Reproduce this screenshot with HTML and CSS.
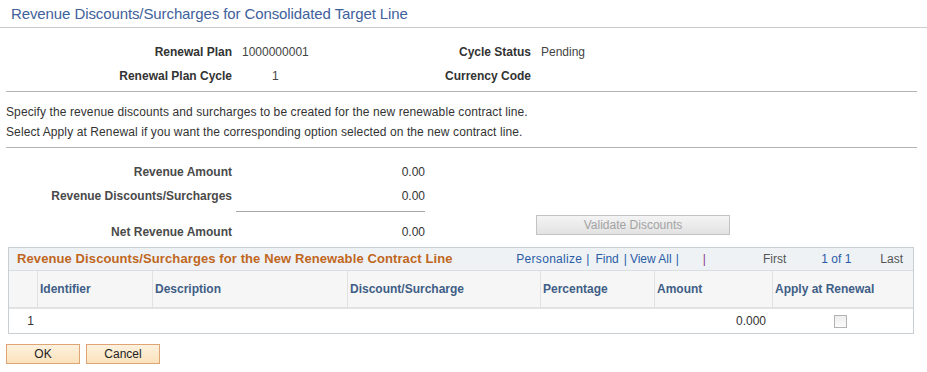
FILE: index.html
```html
<!DOCTYPE html>
<html lang="en">
<head>
    <meta charset="UTF-8">
    <title>Revenue Discounts/Surcharges for Consolidated Target Line</title>
    <link rel="stylesheet" href="styles.css">
</head>
<body>
    <h1 class="page-title">Revenue Discounts/Surcharges for Consolidated Target Line</h1>

    <div class="fields">
        <span class="label">Renewal Plan</span>
        <span class="value">1000000001</span>
        <span class="label">Cycle Status</span>
        <span class="value">Pending</span>
        <span class="label">Renewal Plan Cycle</span>
        <span class="value cycle">1</span>
        <span class="label">Currency Code</span>
        <span class="value"></span>
    </div>

    <hr class="rule">
    <p class="instructions">Specify the revenue discounts and surcharges to be created for the new renewable contract line.<br>
    Select Apply at Renewal if you want the corresponding option selected on the new contract line.</p>
    <hr class="rule rule-bottom">

    <div class="amounts">
        <span class="amt-label">Revenue Amount</span>
        <span class="amt-value">0.00</span>
        <span class="amt-label">Revenue Discounts/Surcharges</span>
        <span class="amt-value">0.00</span>
        <span class="total-line"></span>
        <span class="amt-label net-row">Net Revenue Amount</span>
        <span class="amt-value net-row">0.00</span>
        <button class="btn-validate" disabled>Validate Discounts</button>
    </div>

    <div class="grid">
        <div class="grid-head">
            <span class="grid-title">Revenue Discounts/Surcharges for the New Renewable Contract Line</span>
            <div class="grid-nav">
                <a class="nav-link nl-personalize">Personalize</a>
                <span class="sep">|</span>
                <a class="nav-link nl-find">Find</a>
                <span class="sep sep-b">|</span>
                <a class="nav-link nl-view">View All</a>
                <span class="sep sep-c">|</span>
                <span class="sep sep-purple">|</span>
                <span class="nav-off nl-first">First</span>
                <a class="nav-link nl-count">1 of 1</a>
                <span class="nav-off nl-last">Last</span>
            </div>
        </div>
        <table class="grid-table">
            <colgroup>
                <col style="width:28px">
                <col style="width:115px">
                <col style="width:195px">
                <col style="width:193px">
                <col style="width:114px">
                <col style="width:118px">
                <col style="width:141px">
            </colgroup>
            <thead>
                <tr>
                    <th></th>
                    <th>Identifier</th>
                    <th>Description</th>
                    <th>Discount/Surcharge</th>
                    <th>Percentage</th>
                    <th>Amount</th>
                    <th>Apply at Renewal</th>
                </tr>
            </thead>
            <tbody>
                <tr>
                    <td class="row-num">1</td>
                    <td></td>
                    <td></td>
                    <td></td>
                    <td></td>
                    <td class="num">0.000</td>
                    <td class="check-cell"><span class="checkbox"></span></td>
                </tr>
            </tbody>
        </table>
    </div>

    <div class="actions">
        <button class="btn">OK</button>
        <button class="btn">Cancel</button>
    </div>
</body>
</html>
```

FILE: styles.css
```css
body {
    margin: 0;
    font-family: "Liberation Sans", Arial, sans-serif;
    font-size: 12px;
    color: #333;
    background: #fff;
}
.page-title {
    margin: 0;
    padding: 5px 11px 4px;
    font-size: 15px;
    font-weight: normal;
    line-height: 18px;
    letter-spacing: -0.1px;
    color: #41619b;
    border-bottom: 1px solid #cbcbcb;
}
.fields {
    display: grid;
    grid-template-columns: 232px 179px 100px auto;
    column-gap: 10px;
    grid-auto-rows: 24px;
    line-height: 24px;
    margin-top: 12px;
}
.label {
    font-weight: bold;
    text-align: right;
    white-space: nowrap;
}
.value {
    color: #444;
}
.value.cycle {
    padding-left: 30px;
}
.rule {
    border: 0;
    border-top: 1px solid #b3b3b3;
    height: 0;
    margin: 3px 10px 0 6px;
}
.rule-bottom {
    margin-top: 5px;
}
.instructions {
    margin: 10px 0 0;
    padding-left: 6px;
    line-height: 20px;
    letter-spacing: 0.1px;
}
.amounts {
    display: grid;
    grid-template-columns: 236px 189px 111px 194px;
    grid-template-rows: 24px 24px 12px 24px;
    line-height: 24px;
    margin-top: 12px;
}
.amt-label {
    grid-column: 1;
    font-weight: bold;
    color: #4a4a4a;
    text-align: right;
    padding-right: 4px;
    white-space: nowrap;
}
.amt-value {
    grid-column: 2;
    text-align: right;
}
.total-line {
    grid-column: 2;
    grid-row: 3;
    margin-top: 3px;
    height: 0;
    border-top: 1px solid #a8a8a8;
}
.amounts .net-row {
    grid-row: 4;
}
.btn-validate {
    grid-column: 4;
    grid-row: 4;
    margin-top: -5px;
    height: 20px;
    padding: 0;
    font-family: inherit;
    font-size: 12px;
    color: #a3a3a3;
    background: linear-gradient(#f4f4f4, #e2e2e2);
    border: 1px solid #c3c3c3;
    border-radius: 0;
}
.grid {
    margin: 3px 13px 0 8px;
    border: 1px solid #c9ced3;
}
.grid-head {
    display: flex;
    align-items: center;
    height: 22px;
    line-height: 22px;
    padding: 0 10px 0 8px;
    background: #eef2f5;
    border-bottom: 1px solid #dadee2;
}
.grid-title {
    font-size: 13px;
    font-weight: bold;
    letter-spacing: 0.1px;
    color: #c0661e;
    white-space: nowrap;
}
.grid-nav {
    display: flex;
    margin-left: auto;
    white-space: nowrap;
}
.nav-link {
    color: #2a5ca6;
}
.nav-off {
    color: #555;
}
.nl-personalize {
    letter-spacing: 0.3px;
}
.sep {
    color: #2a5ca6;
    margin-left: 4px;
}
.nl-find {
    margin-left: 6px;
}
.sep-b {
    margin-left: 5px;
}
.nl-view {
    margin-left: 3px;
}
.sep-c {
    margin-left: 4px;
}
.sep-purple {
    color: #8b3a8f;
    margin-left: 24px;
}
.nl-first {
    margin-left: 57px;
}
.nl-count {
    margin-left: 35px;
}
.nl-last {
    margin-left: 29px;
}
.grid-table {
    width: 100%;
    table-layout: fixed;
    border-collapse: separate;
    border-spacing: 0;
}
.grid-table th {
    height: 36px;
    padding: 0 0 0 2px;
    text-align: left;
    font-weight: bold;
    color: #3f5e86;
    background: #f6f6f6;
    border-bottom: 2px solid #e2e2e2;
    white-space: nowrap;
}
.grid-table th + th {
    border-left: 1px solid #e1e1e1;
}
.grid-table td {
    height: 24px;
    padding: 0;
}
.grid-table .row-num {
    text-align: right;
    padding-right: 3px;
}
.grid-table .num {
    text-align: right;
    padding-right: 6px;
}
.grid-table .check-cell {
    text-align: center;
    padding-right: 4px;
}
.checkbox {
    display: inline-block;
    width: 11px;
    height: 11px;
    vertical-align: middle;
    border: 1px solid #b3b3b3;
    background: linear-gradient(#eeeeee, #fbfbfb);
}
.actions {
    display: flex;
    gap: 6px;
    margin: 10px 0 0 6px;
}
.btn {
    width: 74px;
    height: 20px;
    padding: 0;
    font-family: inherit;
    font-size: 12px;
    color: #222;
    background: linear-gradient(#fdf1de, #fbe2bc);
    border: 1px solid #dea474;
    border-radius: 0;
}
```
